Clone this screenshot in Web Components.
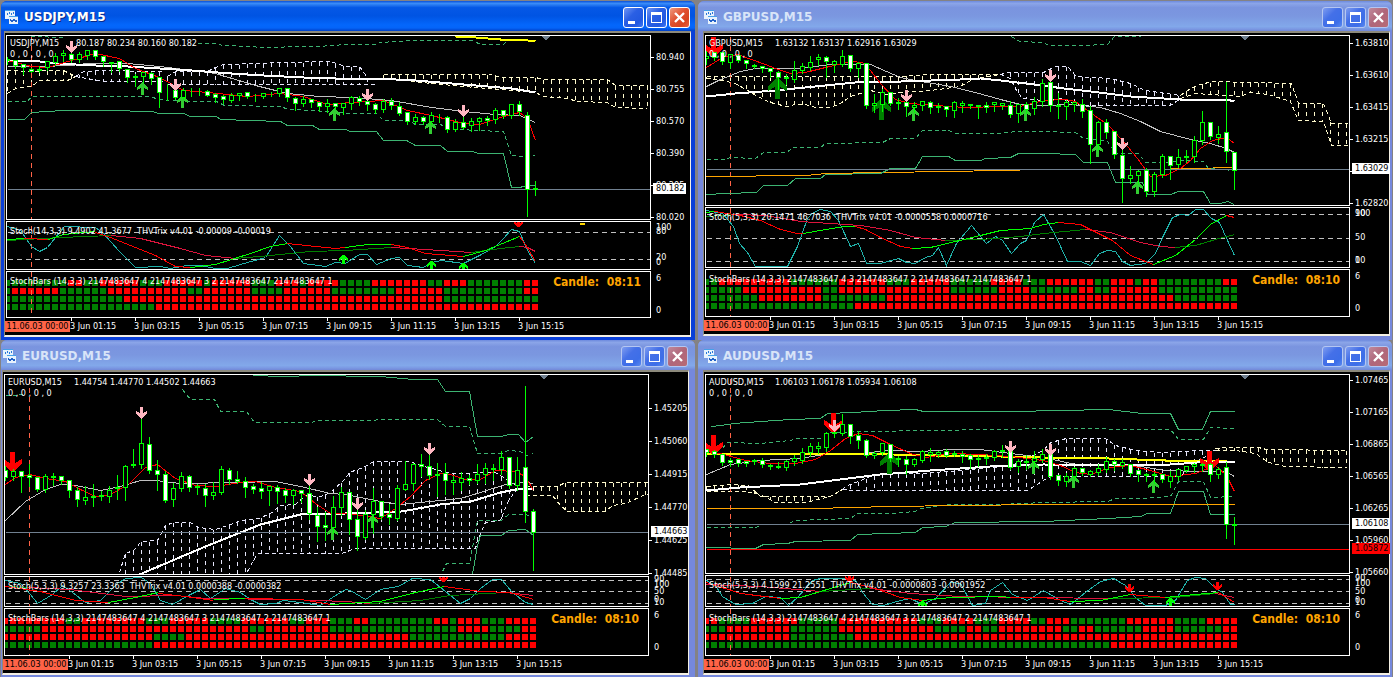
<!DOCTYPE html>
<html lang="en">
<head>
<meta charset="utf-8">
<title>Charts</title>
<style>
    html, body {
        margin: 0;
        height: 100%;
        background: #848284;
    }
</style>
</head>
<body>
<mdi-desktop>
    <chart-window caption="USDJPY,M15" active style="--edge-left: 3px; --edge-right: 4px; --edge-bottom: 3px">
        <trade-chart symbol="USDJPY"></trade-chart>
    </chart-window>
    <chart-window caption="GBPUSD,M15" style="--edge-left: 5px; --edge-right: 2px; --edge-bottom: 4px">
        <trade-chart symbol="GBPUSD"></trade-chart>
    </chart-window>
    <chart-window caption="EURUSD,M15" style="--edge-left: 1px; --edge-right: 6px; --edge-bottom: 2px">
        <trade-chart symbol="EURUSD"></trade-chart>
    </chart-window>
    <chart-window caption="AUDUSD,M15" style="--edge-left: 5px; --edge-right: 2px; --edge-bottom: 2px">
        <trade-chart symbol="AUDUSD"></trade-chart>
    </chart-window>
</mdi-desktop>

<script>
// Points are canvas pixels, measured from each chart's origin.
// Candle: u = up, d = down, then high, body top, body bottom, low. One every 8px.
// Bars: run lengths of green / red cells, newest on the right.
const CHARTS = {
    USDJPY: {
        title: 'USDJPY,M15',
        quote: '80.187 80.234 80.160 80.182',
        x: 7, y: 36, stochY: 222, stochHeight: 49, barsHeight: 47, barsTop: 8,
        axisTop: 16, axisGap: 20,
        prices: ['80.940', '80.755', '80.570', '80.390', '80.205', '80.020'],
        tags: [['80.182', 148, 'white']],
        lastPrice: 189,
        candles: `u56 59 60 63,d59 60 65 67,d63 64 67 73,d67 69 71 71,u65 69 70 71,u60 61 67 69,u52 56 62 64,u49 53 55 60,
            d51 54 59 61,u51 54 59 61,u49 50 55 58,d49 50 56 58,d56 56 61 65,u61 62 63 71,d61 61 68 70,d68 69 77 81,
            d73 76 77 85,u71 72 76 81,d71 73 78 83,d76 77 92 106,d83 90 90 99,d88 90 97 98,u87 90 97 98,d87 91 91 95,
            d87 90 90 94,d89 91 95 95,d92 94 97 101,d94 96 99 102,u92 95 100 101,u92 93 95 99,d91 92 96 97,d93 94 94 100,
            u92 93 96 97,d91 93 93 95,u87 88 93 95,d88 88 97 100,d96 98 103 109,u95 99 103 105,d98 99 102 106,d101 102 106 110,
            u98 103 106 111,d102 103 106 108,u102 103 107 113,u95 97 103 108,d95 98 101 104,d98 101 104 109,d102 104 109 112,u98 101 109 111,
            d97 101 105 108,d101 106 113 114,d111 112 121 123,u113 117 121 123,d115 117 121 123,u111 115 121 123,d113 116 116 121,d115 117 129 131,
            u118 122 129 130,d115 122 127 128,u117 121 125 130,u116 118 121 129,d115 118 120 124,u107 110 119 122,d109 110 115 117,u104 104 115 117,
            d100 104 111 114,d111 115 189 215,d180 188 189 194`,
        clouds: [
            ['#fffacd', '7,70 31,71 47,70 63,70 75,76', '7,93 15,88 31,86 39,80 67,80 75,76'],
            ['#e6e6fa', '75,76 83,71 103,70 155,71 163,71', '75,76 103,81 163,81'],
            ['#e6e6fa', '167,76 175,71 207,71 215,67 223,64 255,63 279,62 330,61 345,66 359,66 367,77', '167,84 375,84'],
            ['#fffacd', '383,74 490,74 500,77 535,77 543,79 607,79 615,85 647,85', '383,78 431,83 475,87 535,92 543,96 567,98 577,101 607,102 615,107 647,108']
        ],
        lines: [
            ['mediumseagreen', '7,119 24,119 31,112 62,110 124,110 134,111 152,111 158,113 184,113 189,116 216,116 220,119 280,121 287,125 312,125 319,129 345,129 350,131 376,131 383,140 406,140 415,145 440,145 447,151 472,151 478,153 503,153 511,187 519,187 527,185 535,185'],
            ['mediumseagreen', '7,101 27,101 31,96 150,96 158,99 189,101 216,101 224,105 280,106 288,109 312,110 350,113 376,113 383,120 408,120 415,124 440,124 447,128 475,130 503,131 511,155 519,156 535,155', 1, '4 3'],
            ['mediumseagreen', '31,36 63,37', 1, '4 3'],
            ['mediumseagreen', '197,43 217,43 222,45 252,46 258,47 281,47 287,46 318,46 345,44 376,44 379,42 415,40 472,40 480,44 503,44 506,41', 1, '4 3'],
            ['yellow', '455,36 475,37 500,39 520,39 535,41', 2],
            ['silver', '7,66 39,66 71,65 87,63 127,63 159,66 191,70 215,73 255,85 287,93 319,96 351,97 391,100 431,107 463,111 495,114 519,115 535,122'],
            ['white', '7,60 39,61 55,63 95,65 127,66 159,68 191,70 231,73 263,75 303,77 335,78 375,78 415,80 463,84 511,88 535,92', 2],
            ['red', '7,60 31,66 47,67 71,60 95,53 119,58 135,68 159,77 183,90 207,92 247,96 279,93 303,96 327,104 351,102 383,100 407,110 431,115 463,123 479,124 503,116 519,112 527,118 535,140']
        ],
        arrows: ['pd 71 53', 'pd 175 91', 'pd 367 101', 'pd 463 117', 'gu 142 81', 'gu 182 94', 'gu 334 107', 'gu 430 120'],
        stoch: {
            title: 'Stoch(14,3,3) 9.4902 41.3677  THVTrix v4.01 -0.00009 -0.00019',
            axis: [['100', 1], ['80', 5], ['20', 31], ['0', 36]],
            levels: [232, 259],
            lines: [
                ['lightseagreen', '7,226 20,230 31,246 39,251 47,247 55,237 64,226 95,227 103,233 118,250 135,267 160,266 170,268 186,265 200,265 215,268 227,268 240,264 265,257 279,235 290,246 303,263 325,266 335,262 345,263 359,254 367,254 376,264 391,258 399,257 407,265 423,267 431,262 441,260 463,263 479,255 495,246 503,238 511,229 519,231 527,250 535,263'],
                ['green', '7,240 60,237 111,235'],
                ['crimson', '111,235 140,238 180,248 205,255 235,258'],
                ['green', '235,258 270,255 310,251 345,250 391,247'],
                ['crimson', '391,247 425,249 471,252'],
                ['green', '471,252 500,248 519,246'],
                ['crimson', '519,246 527,247 535,251'],
                ['lime', '7,239 24,238'],
                ['red', '24,238 48,239'],
                ['lime', '48,239 63,234 95,231'],
                ['red', '95,232 110,237 135,247 155,255 175,266 190,267'],
                ['lime', '190,267 215,264 250,253 270,246 287,243'],
                ['red', '287,243 315,246 335,248 345,247'],
                ['lime', '345,247 367,244 391,244'],
                ['red', '391,244 407,247 425,253 463,256'],
                ['lime', '463,256 485,250 519,236'],
                ['red', '519,236 527,247 535,261'],
                ['gold', '579,223 584,223', 2]
            ],
            arrows: ['lu 343 254', 'lu 431 260', 'lu 463 262', 'rs 518 227']
        },
        bars: {
            title: 'StochBars (14,3,3) 2147483647 4 2147483647 3 2 2147483647 2147483647 1',
            timer: 'Candle:  08:11',
            rows: [
                'g8 r2 g2 r5 g3 r5 g1 r5 g3 r3 g1 r4 g4 r7 g2 r3 g7 r2',
                'g1 r6 g6 r10 g2 r6 g4 r6 g8 r6 g10 r2',
                'g15 r40 g12',
                'g19 r48'
            ]
        }
    },

    GBPUSD: {
        title: 'GBPUSD,M15',
        quote: '1.63132 1.63137 1.62916 1.63029',
        x: 706, y: 36, stochY: 208, stochHeight: 61, barsHeight: 48, barsTop: 9,
        axisTop: 2, axisGap: 20,
        prices: ['1.63810', '1.63610', '1.63415', '1.63215', '1.63015', '1.62820'],
        tags: [['1.63029', 128, 'white']],
        lastPrice: 169,
        candles: `u50 56 58 63,d51 52 57 59,d52 52 61 63,u53 54 62 67,d54 55 60 61,d59 60 63 67,d63 65 66 67,d65 66 68 71,
            d67 68 71 76,d70 72 77 88,d73 77 78 83,u60 70 79 81,u62 66 70 72,u55 62 67 69,u53 57 59 64,d55 57 61 76,
            u59 61 64 71,u49 56 64 65,d54 55 68 70,u61 63 68 76,d63 63 105 107,u93 103 105 111,u88 92 104 110,d91 92 103 104,
            d97 102 103 108,d98 102 106 115,u101 105 107 111,u100 101 105 109,d100 102 107 112,d102 106 107 111,d105 106 109 115,u100 102 110 116,
            u100 103 105 111,d104 104 105 107,d104 105 106 117,d101 105 107 111,u101 102 104 110,u103 103 105 108,d100 105 114 116,u103 104 113 121,
            d101 104 109 112,u96 101 108 113,u78 83 101 105,d79 82 105 110,d92 105 106 117,u99 102 106 118,u101 102 104 110,d98 104 111 116,
            d105 110 144 162,u120 122 144 149,d118 122 132 137,d131 131 154 157,d148 155 178 201,u165 175 178 182,u169 171 175 183,d167 170 191 195,
            u171 174 191 195,u153 156 174 176,d155 156 165 178,u148 157 164 166,d149 156 157 161,u135 140 156 161,u110 122 140 143,d121 122 136 138,
            u125 134 137 142,d81 132 151 161,d152 152 170 188`,
        clouds: [
            ['#fffacd', '706,76 900,76 930,74 1000,74', '706,78 722,80 735,83 747,90 759,97 770,102 786,106 795,104 805,104 815,107 830,107 840,103 850,96 870,90 886,94 900,92 930,90 960,86 970,80 980,77 1000,74'],
            ['#e6e6fa', '1000,74 1007,72 1043,72 1055,66 1067,66 1076,76 1110,78 1130,83 1145,90 1180,95', '1000,74 1010,78 1016,90 1022,98 1043,100 1060,98 1075,103 1085,105 1170,105 1180,98'],
            ['#fffacd', '1180,95 1190,88 1200,84 1212,81 1291,83 1298,103 1323,103 1331,123 1347,123', '1180,98 1195,93 1240,96 1250,92 1268,94 1290,101 1298,120 1323,121 1331,145 1347,145']
        ],
        lines: [
            ['orange', '706,176 806,175 826,173 880,172 950,171 1043,169 1150,169 1234,167'],
            ['mediumseagreen', '706,194 726,193 756,192 763,185 787,185 795,178 820,178 825,174 880,173 890,168 915,168 922,156 948,156 955,160 980,160 985,158 1010,157 1018,153 1043,153 1075,154 1083,162 1107,162 1115,182 1142,182 1147,194 1170,194 1178,191 1203,191 1210,203 1220,203 1227,201 1234,204'],
            ['mediumseagreen', '706,159 725,159 730,157 755,158 763,152 786,152 793,147 820,147 825,143 882,142 890,138 915,138 922,130 948,130 955,133 1000,133 1015,131 1043,131 1075,132 1083,138 1107,141 1115,153 1138,153 1145,162 1165,162 1180,160 1203,161 1208,168 1234,170', 1, '4 3'],
            ['mediumseagreen', '1011,36 1019,41 1043,42 1048,45 1080,45 1107,44 1114,36 1140,36', 1, '4 3'],
            ['silver', '706,86 720,79 740,71 755,68 800,68 830,64 870,64 886,71 900,77 920,81 950,86 975,92 1000,99 1020,104 1043,105 1070,104 1100,107 1120,113 1140,121 1160,131 1190,139 1210,143 1226,148 1234,152'],
            ['white', '706,96 735,93 775,90 815,86 855,82 901,81 960,79 980,78 1000,80 1042,85 1063,88 1090,91 1130,96 1180,99 1226,99 1234,101', 2],
            ['red', '706,67 722,57 737,54 765,64 775,68 790,73 805,72 825,67 850,61 862,62 870,70 880,83 895,99 910,103 935,105 965,107 1000,106 1020,106 1043,100 1065,99 1075,101 1091,113 1107,124 1122,140 1137,158 1150,176 1165,175 1180,168 1190,160 1200,148 1212,140 1226,137 1234,143']
        ],
        arrows: ['RD 713 57', 'DU 777 77', 'DU 881 98', 'gu 913 107', 'gu 1025 107', 'gu 1097 143', 'gu 1137 180', 'pd 906 102', 'pd 1050 82', 'pd 1122 150'],
        stoch: {
            title: 'Stoch(5,3,3) 20.1471 46.7036  THVTrix v4.01 -0.0000558 0.0000716',
            axis: [['90', 1], ['100', 1], ['50', 25], ['10', 48], ['0', 48]],
            levels: [214, 238, 261],
            lines: [
                ['lightseagreen', '706,210 722,213 733,226 739,243 747,252 755,266 787,266 797,246 807,218 813,212 820,209 830,211 838,220 850,246 858,243 866,263 880,263 898,258 906,262 915,263 925,257 932,255 938,247 946,265 956,243 971,225 986,243 995,236 1002,240 1011,253 1020,243 1026,240 1034,222 1043,214 1055,235 1067,261 1080,261 1090,265 1099,253 1107,250 1115,251 1122,261 1130,265 1145,263 1155,253 1163,235 1172,217 1180,214 1188,215 1195,209 1203,209 1211,218 1219,222 1227,240 1234,255'],
                ['green', '706,216 735,214'],
                ['crimson', '735,214 765,215 800,221 860,225 890,230 915,237 945,240'],
                ['green', '945,240 980,239 1020,236 1043,233 1085,229'],
                ['crimson', '1085,229 1110,232 1140,242 1160,246 1175,247'],
                ['green', '1175,247 1195,245 1215,239 1234,234'],
                ['lime', '706,212 714,211'],
                ['red', '714,211 740,215 760,220 780,229 797,233 803,233'],
                ['lime', '803,233 825,229 845,226 855,226'],
                ['red', '855,226 865,229 880,237 900,246 912,248'],
                ['lime', '912,248 930,247 955,241 980,235 1000,230 1030,228 1043,224 1058,222'],
                ['red', '1058,222 1080,224 1100,234 1112,240 1130,255 1153,264'],
                ['lime', '1153,264 1175,255 1195,239 1210,224 1226,215'],
                ['red', '1226,215 1234,217']
            ],
            arrows: []
        },
        bars: {
            title: 'StochBars (14,3,3) 2147483647 4 3 2147483647 2 2147483647 2147483647 1',
            timer: 'Candle:  08:10',
            rows: [
                'g2 r9 g6 r6 g3 r5 g5 r4 g3 r6 g2 r3 g1 r2 g8 r2',
                'g5 r10 g2 r14 g6 r4 g6 r2 g2 r6 g10',
                'g7 r8 g8 r36 g8',
                'g19 r48'
            ]
        }
    },

    EURUSD: {
        title: 'EURUSD,M15',
        quote: '1.44754 1.44770 1.44502 1.44663',
        x: 5, y: 375, stochY: 577, stochHeight: 31, barsHeight: 48, barsTop: 9,
        axisTop: 28, axisGap: 21,
        prices: ['1.45205', '1.45060', '1.44915', '1.44770', '1.44625', '1.44485'],
        tags: [['1.44663', 152, 'white']],
        lastPrice: 532,
        candles: `d465 470 477 479,u468 471 476 479,d470 471 476 491,d463 475 477 485,d476 477 489 490,u473 476 489 491,d472 476 477 484,d475 476 480 483,
            d479 480 490 496,d486 490 499 505,u485 497 500 503,d483 496 497 505,d490 495 496 499,u485 490 496 501,u474 487 488 498,u464 466 487 499,
            d448 464 465 466,u417 443 464 467,d436 444 470 472,d459 470 474 489,d470 474 500 501,u482 488 499 505,u471 476 488 490,d474 476 487 490,
            d483 486 487 493,d483 488 495 505,u481 492 495 498,u465 469 492 493,d467 470 479 483,d470 479 481 482,d476 481 487 496,d483 486 489 492,
            d481 488 491 497,u485 486 490 504,d484 487 491 502,d487 490 495 501,u488 490 495 503,d490 490 493 501,d483 493 513 518,d506 515 526 540,
            d511 525 527 539,u495 507 527 532,u486 492 507 514,d491 492 519 533,d509 519 536 549,u509 514 537 538,u487 501 514 532,d500 501 516 518,
            d503 514 517 523,u484 488 518 519,u460 484 489 489,u462 464 483 489,d453 464 466 475,d454 466 475 478,d462 474 475 495,d462 473 480 493,
            u475 480 482 493,u471 478 482 489,d474 478 480 483,u463 474 480 482,u462 468 474 482,d463 468 469 479,u450 457 469 473,d456 457 485 487,
            u456 470 485 489,d385 467 511 521,d508 511 532 569`,
        clouds: [
            ['#e6e6fa', '119,572 125,553 133,550 141,541 157,540 165,525 173,522 190,522 198,527 215,529 230,524 240,520 258,518 270,513 280,505 295,504 305,495 320,496 330,492 345,478 349,472 365,466 373,461 410,461 420,465 450,473 495,472 505,478 517,486', '119,580 242,580 257,553 341,553 355,548 475,548 477,540 485,522 500,520 508,500 517,488'],
            ['#fffacd', '525,486 557,486 565,482 647,482', '525,495 552,495 560,505 567,511 605,511 612,505 625,503 645,494 647,494']
        ],
        lines: [
            ['mediumseagreen', '253,375 282,376 315,375 375,376 380,376 413,379 437,379 445,391 469,391 477,436 501,436 508,434 518,434 525,442 533,436'],
            ['mediumseagreen', '182,389 190,399 214,399 220,411 246,411 254,422 311,422 316,420 437,419 445,426 469,426 477,453 501,453 508,450 520,451 526,455 533,453', 1, '4 3'],
            ['mediumseagreen', '5,395 15,395 25,393', 1, '4 3'],
            ['mediumseagreen', '472,574 477,545 480,535 501,535 508,530 525,529 533,535'],
            ['mediumseagreen', '442,571 446,563 469,563 477,520 501,520 508,514 525,514 533,517', 1, '4 3'],
            ['silver', '5,520 25,501 45,489 60,484 75,485 100,490 120,486 140,480 155,480 180,483 235,482 275,481 300,486 330,493 345,494 380,501 400,504 430,501 460,498 480,492 505,484 525,482 533,483'],
            ['white', '139,574 205,546 260,524 300,514 345,513 372,512 401,511 440,504 470,501 500,492 520,488 533,488', 2],
            ['red', '5,484 15,477 30,474 45,478 65,481 80,489 95,496 110,494 128,484 145,467 157,464 175,478 195,485 215,486 240,482 255,481 275,487 300,491 315,503 330,513 345,513 360,515 380,518 395,508 410,496 425,480 440,473 450,474 465,479 480,479 495,470 515,471 525,476 533,490']
        ],
        arrows: ['RD 12 472', 'pd 141 419', 'pd 309 486', 'pd 357 510', 'pd 429 455', 'gu 332 526', 'gu 372 514'],
        stoch: {
            title: 'Stoch(5,3,3) 9.3257 23.3363  THVTrix v4.01 0.0000388 -0.0000382',
            axis: [['90', -2], ['100', 3], ['50', 10], ['10', 21], ['0', 18]],
            levels: [580, 591, 603],
            lines: [
                ['lightseagreen', '5,580 20,583 30,594 37,603 52,594 62,585 72,592 85,602 100,600 117,583 125,578 141,577 150,583 160,600 172,604 190,594 200,589 210,598 225,588 240,592 250,599 260,604 275,603 283,600 300,602 320,605 332,597 345,589 350,590 365,599 380,589 398,586 412,578 430,579 445,591 460,603 470,598 480,588 492,579 501,579 512,592 525,602 533,604'],
                ['green', '5,586 28,587'],
                ['crimson', '28,587 70,589 125,596 175,595 205,598 290,599 345,601 370,603'],
                ['green', '370,603 420,600 450,595 505,592'],
                ['crimson', '505,592 533,595'],
                ['red', '5,586 40,591 75,600 108,602'],
                ['lime', '108,602 135,597 158,592'],
                ['red', '158,593 185,596 213,600'],
                ['lime', '213,599 245,598'],
                ['red', '245,598 300,599 330,604'],
                ['lime', '330,604 380,601 415,592 444,586'],
                ['red', '444,586 480,591 510,592 533,599']
            ],
            arrows: ['rs 443 582']
        },
        bars: {
            title: 'StochBars (14,3,3) 2147483647 4 2147483647 3 2147483647 2 2147483647 1',
            timer: 'Candle:  08:10',
            rows: [
                'r8 g2 r8 g3 r5 g4 r6 g2 r3 g3 r2 g8 r2 g1 r3 g3 r4',
                'g5 r26 g2 r8 g16 r4 g4 r2',
                'r19 g4 r28 g12 r4',
                'g19 r48'
            ]
        }
    },

    AUDUSD: {
        title: 'AUDUSD,M15',
        quote: '1.06103 1.06178 1.05934 1.06108',
        x: 706, y: 375, stochY: 576, stochHeight: 32, barsHeight: 48, barsTop: 9,
        axisTop: 0, axisGap: 20,
        prices: ['1.07465', '1.07165', '1.06865', '1.06565', '1.06265', '1.05960', '1.05660'],
        tags: [['1.06108', 144, 'white'], ['1.05872', 169, 'red']],
        lastPrice: 524,
        stopLoss: 549,
        candles: `d448 449 452 455,d449 451 454 456,d453 454 462 464,d457 460 462 465,d458 459 463 465,d460 461 463 465,u458 460 461 463,d457 460 464 466,
            d463 465 466 468,d461 466 467 467,u459 461 467 469,u454 458 461 464,u447 452 460 462,u442 446 452 455,u441 446 448 452,u431 433 447 450,
            d425 432 433 436,u413 424 433 434,d423 424 436 442,d430 435 440 447,d438 440 455 456,u450 453 455 457,u442 443 452 454,d444 444 458 460,
            d455 458 459 465,d455 459 464 473,u457 459 464 465,u449 451 460 461,u447 452 454 460,u450 452 454 456,d448 451 455 456,d450 453 454 455,
            d450 454 456 461,d453 455 459 467,d454 458 459 465,d453 457 458 463,u449 451 457 459,d444 450 451 456,d448 451 467 468,u458 461 466 471,
            d454 461 462 468,u450 458 461 466,u448 454 459 461,d451 454 476 478,d474 475 480 484,u472 476 481 485,u466 468 476 478,d467 468 472 474,
            u469 471 474 475,u463 468 472 474,u456 461 469 471,d458 461 464 469,u458 462 465 467,d464 464 473 475,d469 470 474 480,d472 474 475 480,
            d471 474 475 482,d473 474 479 481,u470 476 481 486,u469 469 476 479,u465 466 470 471,u462 464 466 471,d462 464 465 470,d462 464 474 480,
            u466 469 474 477,d461 467 524 537,d516 524 525 543`,
        clouds: [
            ['#fffacd', '706,486 730,484 748,485 760,496 830,496 842,489', '706,491 745,491 760,494 775,502 805,502 830,496 842,489'],
            ['#e6e6fa', '842,489 845,486 870,476 880,473 920,473 960,470 990,467 1010,466 1030,456 1043,450 1050,442 1066,438 1105,438 1115,445 1135,450 1160,452 1200,450 1215,450', '842,489 850,490 1027,490 1035,485 1043,480 1050,476 1180,476 1190,465 1215,450'],
            ['#fffacd', '1215,448 1225,447 1258,447 1266,449 1347,450', '1215,450 1235,450 1255,453 1268,462 1285,466 1347,467']
        ],
        lines: [
            ['mediumseagreen', '711,426 728,424 733,423 760,421 790,419 820,418 827,413 852,412 885,410 915,409 923,411 1012,411 1108,409 1142,413 1170,413 1178,429 1202,429 1210,411 1234,411'],
            ['mediumseagreen', '722,448 727,442 760,443 790,440 797,438 822,438 830,432 920,430 1000,429 1043,428 1170,429 1178,439 1203,439 1210,427 1234,428', 1, '4 3'],
            ['mediumseagreen', '706,527 755,527 763,524 786,524 795,520 820,519 850,518 857,513 890,513 915,511 920,508 950,504 1000,504 1043,502 1107,501 1115,498 1140,498 1170,496 1178,481 1203,481 1210,497 1234,496', 1, '4 3'],
            ['mediumseagreen', '706,547 755,548 763,544 787,543 795,541 850,540 857,534 915,532 922,527 945,526 955,522 1043,521 1107,518 1140,516 1147,513 1170,513 1178,491 1203,491 1210,514 1234,514'],
            ['orange', '706,508 814,508 890,506 960,505 1043,504 1234,504'],
            ['silver', '706,474 730,464 760,460 800,458 830,453 860,453 890,450 920,451 950,449 980,449 1010,453 1043,457 1080,465 1110,464 1140,466 1165,470 1200,471 1225,471 1234,476'],
            ['yellow', '706,453 850,453 935,455 1000,456 1043,457 1108,458 1165,460 1226,460', 2],
            ['white', '706,490 740,487 800,484 840,479 880,474 930,470 990,466 1043,464 1110,465 1170,464 1210,461 1234,461', 2],
            ['red', '706,451 720,453 745,460 770,463 795,463 815,459 830,450 845,438 858,433 872,435 890,444 910,453 925,457 950,453 980,454 1010,456 1043,460 1060,465 1075,472 1090,474 1110,467 1130,465 1150,470 1170,476 1195,473 1215,465 1226,475 1234,491']
        ],
        arrows: ['RD 713 455', 'RD 833 433', 'RD 1209 471', 'pd 834 432', 'DU 889 452', 'pd 1010 453', 'pd 1050 456', 'gu 1033 460', 'gu 1073 474', 'gu 1153 479'],
        stoch: {
            title: 'Stoch(5,3,3) 4.1599 21.2551  THVTrix v4.01 -0.0000803 -0.0001952',
            axis: [['90', -2], ['100', 3], ['50', 11], ['10', 22], ['0', 20]],
            levels: [579, 591, 603],
            lines: [
                ['lightseagreen', '706,580 715,585 722,596 735,604 752,603 765,596 780,597 788,605 797,597 812,580 820,578 845,578 855,580 862,592 872,604 883,605 900,600 910,598 922,604 935,598 950,582 960,583 972,605 985,603 990,590 1002,582 1012,594 1027,600 1043,590 1060,600 1070,604 1085,592 1100,581 1113,578 1125,585 1135,597 1145,605 1165,605 1175,600 1187,580 1195,577 1205,578 1215,588 1222,592 1230,604 1234,604'],
                ['crimson', '706,584 760,586 820,591'],
                ['green', '820,591 870,588'],
                ['crimson', '870,588 910,593 960,596 1110,598'],
                ['green', '1110,598 1175,597 1215,593'],
                ['crimson', '1215,593 1234,597'],
                ['red', '706,582 740,593 780,598'],
                ['lime', '780,598 800,597 830,588 850,582'],
                ['red', '850,582 875,588 900,597 922,600'],
                ['lime', '922,600 950,597 1000,596 1010,597'],
                ['red', '1010,597 1043,597 1070,601'],
                ['lime', '1070,601 1100,600 1130,594'],
                ['red', '1130,594 1165,597'],
                ['lime', '1165,597 1195,594 1218,592'],
                ['red', '1218,592 1234,602']
            ],
            arrows: ['rs 849 582', 'rs 1129 592', 'rs 1217 590', 'lu 922 600', 'lu 1170 597']
        },
        bars: {
            title: 'StochBars (14,3,3) 2147483647 4 2147483647 3 2147483647 2 2147483647 1',
            timer: 'Candle:  08:10',
            rows: [
                'r2 g4 r6 g5 r10 g3 r4 g3 r4 g2 r3 g7 r6 g4 r4',
                'g3 r8 g6 r12 g4 r2 g2 r8 g2 r2 g6 r4 g6 r2',
                'r11 g8 r48',
                'g51 r16'
            ]
        }
    }
};

const TIMES = ['01:15', '03:15', '05:15', '07:15', '09:15', '11:15', '13:15', '15:15'];

const STEP = 8;

// tip at 0,0 and pointing up
const ARROW = 'M0 0L5.5 6V9L1.5 6V13H-1.5V6L-5.5 9V6Z';
const BIG_ARROW = 'M0 0L9.5 9V14L2.5 9V21H-2.5V9L-9.5 14V9Z';
const THIN_ARROW = 'M0 0L4.5 4V7L1.5 4V9H-1.5V4L-4.5 7V4Z';

const ARROWS = {
    pd: [ARROW, 'lightpink', 180],
    gu: [ARROW, 'limegreen', 0],
    RD: [BIG_ARROW, 'red', 180],
    DU: [BIG_ARROW, 'green', 0],
    lu: [THIN_ARROW, 'lime', 0],
    rs: [THIN_ARROW, 'red', 180]
};

function toPoints(text) {
    return text.split(' ').map(p => p.split(',').map(Number));
}

function valueAt(points, x) {
    for (let i = 1; i < points.length; i++) {
        const [x0, y0] = points[i - 1];
        const [x1, y1] = points[i];
        if (x >= x0 && x <= x1) {
            return y0 + (y1 - y0) * (x - x0) / (x1 - x0);
        }
    }
    return null;
}

function drawLine([color, points, width = 1, dash = 'none']) {
    return `<polyline points="${points}" fill="none" stroke="${color}" stroke-width="${width}" stroke-dasharray="${dash}"/>`;
}

function drawArrow(text) {
    const [kind, x, y] = text.split(' ');
    const [shape, color, turn] = ARROWS[kind];
    return `<path d="${shape}" fill="${color}" transform="translate(${x} ${y}) rotate(${turn})"/>`;
}

function drawCloud([color, top, bottom], left) {
    const upper = toPoints(top);
    const lower = toPoints(bottom);
    let out = drawLine([color, top, 1, '4 3']) + drawLine([color, bottom, 1, '4 3']);
    for (let x = left; x <= left + 645; x += STEP) {
        const a = valueAt(upper, x);
        const b = valueAt(lower, x);
        if (a !== null && b !== null) {
            out += `<path d="M${x} ${Math.round(a)}V${Math.round(b)}" stroke="${color}" stroke-dasharray="4 4"/>`;
        }
    }
    return out;
}

function drawCandles(text, left) {
    return text.split(',').map((item, i) => {
        const candle = item.trim();
        const [high, top, bottom, low] = candle.slice(1).split(' ').map(Number);
        const x = left + i * STEP;
        const fill = candle[0] === 'u' ? 'black' : 'white';
        return `<path d="M${x} ${high}V${low + 1}" stroke="lime"/>
            <rect x="${x - 2}" y="${top}" width="4" height="${bottom - top}" fill="${fill}" stroke="lime"/>`;
    }).join('');
}

function drawBars(rows, top) {
    return rows.map((row, r) => {
        let col = 0;
        return row.split(' ').map(run => {
            let cells = '';
            for (let i = 0; i < Number(run.slice(1)); i++, col++) {
                cells += `<rect x="${col * STEP - 3}" y="${top + r * STEP}" width="6" height="6" fill="${run[0] === 'g' ? 'green' : 'red'}"/>`;
            }
            return cells;
        }).join('');
    }).join('');
}

class MdiDesktop extends HTMLElement {
    constructor() {
        super();
        this.attachShadow({ mode: 'open' });
        this.shadowRoot.innerHTML = `
            <style>
                :host {
                    display: grid;
                    box-sizing: border-box;
                    height: 100vh;
                    padding: 1px 1px 0;
                    grid-template-columns: 1fr 1fr;
                    grid-template-rows: minmax(0, 339fr) minmax(0, 337fr);
                    column-gap: 3px;
                    background: #848284;
                }
            </style>
            <slot></slot>
        `;
    }
}

class ChartWindow extends HTMLElement {
    constructor() {
        super();
        this.attachShadow({ mode: 'open' });
    }

    connectedCallback() {
        this.shadowRoot.innerHTML = `
            <style>
                :host {
                    --frame: #7588dc;
                    --bar: linear-gradient(#6d8ade, #8ba5e8 8%, #7a94df 22%, #7b97e0 50%, #82a8ea 85%, #7c9be4 92%, #7288d8);
                    --caption: #d8e4f8;
                    --button: linear-gradient(135deg, #7f9df0, #4470e8 40%, #3d6ee8 75%, #5a8af0);
                    --close: linear-gradient(135deg, #c08a9c, #b0667a 50%, #b86a74);
                    --ring: #b4c6f2;
                    display: flex;
                    flex-direction: column;
                    min-width: 0;
                    min-height: 0;
                    overflow: hidden;
                    border-radius: 6px 6px 0 0;
                    background: var(--frame);
                }

                :host([active]) {
                    --frame: #0a3fd8;
                    --bar: linear-gradient(#0a50d8, #3a8cf8 8%, #0558e6 22%, #0054e3 50%, #0467fc 80%, #0464f8 90%, #0040c8);
                    --caption: white;
                    --button: linear-gradient(135deg, #6f96f4, #2a5fe4 40%, #2258e0 75%, #3c78f4);
                    --close: linear-gradient(135deg, #ee9a80, #e05030 45%, #d84420 75%, #e86040);
                    --ring: white;
                }

                header {
                    display: flex;
                    align-items: center;
                    gap: 5px;
                    box-sizing: border-box;
                    flex: 0 0 30px;
                    padding: 2px calc(var(--edge-right) + 1px) 0 calc(var(--edge-left) + 1px);
                    background: var(--bar);
                }

                h2 {
                    flex: 1;
                    margin: 0;
                    color: var(--caption);
                    font: bold 12px/16px "DejaVu Sans", sans-serif;
                    white-space: nowrap;
                }

                :host([active]) h2 {
                    text-shadow: 1px 1px #0a2a88;
                }

                .buttons {
                    display: flex;
                    gap: 2px;
                }

                button {
                    display: grid;
                    place-items: center;
                    width: 21px;
                    height: 21px;
                    padding: 0;
                    border: 1px solid var(--ring);
                    border-radius: 3px;
                    background: var(--button);
                }

                .close {
                    background: var(--close);
                }

                svg {
                    display: block;
                }

                .body {
                    flex: 1;
                    display: flex;
                    min-height: 0;
                    margin: 0 var(--edge-right) var(--edge-bottom) var(--edge-left);
                    border: solid #f4f0e4;
                    border-width: 2px 1px 2px 1px;
                    border-top-color: #8c8a7c;
                    border-left-color: #8c8a7c;
                    background: black;
                }
            </style>
            <header>
                <svg width="14" height="15" viewBox="0 0 14 15" shape-rendering="crispEdges">
                    <path d="M0 1h10v5h3v8H4V9H0z" fill="#e8f2fc"/>
                    <path d="M0 0h10v1H0zM4 6h9v1H4z" fill="#48a0e8"/>
                    <path d="M2 5V3M4 4V2M6 5V3M8 4V2" stroke="#2878d8"/>
                    <path d="M5 9l2 3l2-3l2 3l1-2" fill="none" stroke="#2060c8"/>
                </svg>
                <h2>${this.getAttribute('caption')}</h2>
                <div class="buttons">
                    <button type="button" aria-label="Minimize"><svg width="17" height="17"><path d="M3 12h7v3H3z" fill="white"/></svg></button>
                    <button type="button" aria-label="Maximize"><svg width="17" height="17" shape-rendering="crispEdges"><path d="M3 3h11v11H3zM4 6v7h9V6z" fill="white" fill-rule="evenodd"/></svg></button>
                    <button type="button" class="close" aria-label="Close"><svg width="17" height="17"><path d="M4 4L13 13M13 4L4 13" stroke="white" stroke-width="2.4"/></svg></button>
                </div>
            </header>
            <div class="body"><slot></slot></div>
        `;
    }
}

class PlotPane extends HTMLElement {
    constructor() {
        super();
        this.attachShadow({ mode: 'open' });
        this.shadowRoot.innerHTML = `
            <style>
                :host {
                    display: block;
                    position: relative;
                    flex: 1;
                    min-width: 0;
                    overflow: hidden;
                    border: 1px solid white;
                }

                svg {
                    position: absolute;
                    inset: 0;
                    width: 100%;
                    height: 100%;
                }

                .text {
                    position: relative;
                    display: flex;
                    justify-content: space-between;
                    padding: var(--text-top, 4px) 9px 0 3px;
                    white-space: pre;
                }
            </style>
            <svg shape-rendering="crispEdges"></svg>
            <div class="text"><slot></slot></div>
        `;
    }

    set drawing(markup) {
        this.shadowRoot.querySelector('svg').innerHTML = markup;
    }
}

class ValueAxis extends HTMLElement {
    constructor() {
        super();
        this.attachShadow({ mode: 'open' });
        this.shadowRoot.innerHTML = `
            <style>
                :host {
                    display: flex;
                    flex-direction: column;
                    position: relative;
                    flex: 0 0 39px;
                    box-sizing: border-box;
                    padding-left: 5px;
                    line-height: 12px;
                }

                ::slotted(.over) {
                    position: absolute;
                    left: 2px;
                    padding-left: 3px;
                    line-height: 11px;
                }
            </style>
            <slot></slot>
        `;
    }
}

class TimeAxis extends HTMLElement {
    constructor() {
        super();
        this.attachShadow({ mode: 'open' });
        this.shadowRoot.innerHTML = `
            <style>
                :host {
                    display: flex;
                    flex: 0 0 17px;
                    overflow: hidden;
                    white-space: nowrap;
                    line-height: 11px;
                }

                mark {
                    flex: 0 0 65px;
                    height: 11px;
                    margin-top: 3px;
                    text-align: center;
                    background: tomato;
                    color: black;
                }

                time {
                    flex: 0 0 64px;
                    padding-top: 3px;
                    background: linear-gradient(white, white) 1px 0 / 1px 3px no-repeat;
                }
            </style>
            <mark>11.06.03 00:00</mark>${TIMES.map(t => `<time>3 Jun ${t}</time>`).join('')}
        `;
    }
}

class TradeChart extends HTMLElement {
    constructor() {
        super();
        this.attachShadow({ mode: 'open' });
    }

    connectedCallback() {
        const c = CHARTS[this.getAttribute('symbol')];
        this.shadowRoot.innerHTML = `
            <style>
                :host {
                    flex: 1;
                    display: flex;
                    flex-direction: column;
                    min-width: 0;
                    padding-top: 2px;
                    color: white;
                    font: 9px/11px "DejaVu Sans Condensed", "DejaVu Sans", sans-serif;
                }

                .row {
                    display: flex;
                    box-sizing: border-box;
                    margin-left: 1px;
                }

                .price {
                    flex: 1;
                    min-height: 0;
                    margin-bottom: 1px;
                    --text-top: 2px;
                }

                .symbol {
                    display: inline-block;
                    min-width: 66px;
                }

                .price value-axis {
                    padding-top: ${c.axisTop}px;
                    gap: ${c.axisGap}px;
                }

                .price value-axis span:not(.over) {
                    margin-left: -5px;
                    padding-left: 5px;
                    background: linear-gradient(white, white) 0 6px / 3px 1px no-repeat;
                }

                .stoch {
                    flex: 0 0 ${c.stochHeight}px;
                    margin-bottom: 1px;
                }

                .bars {
                    flex: 0 0 ${c.barsHeight}px;
                }

                .tag {
                    z-index: 1;
                    padding-right: 2px;
                    color: black;
                }

                .timer {
                    color: orange;
                    font: bold 12px/12px "DejaVu Sans Condensed", "DejaVu Sans", sans-serif;
                }
            </style>
            <div class="row price">
                <plot-pane><span><span class="symbol">${c.title}</span>${c.quote}<br>0 , 0 , 0 , 0</span></plot-pane>
                <value-axis>
                    ${c.prices.map(p => `<span>${p}</span>`).join('')}
                    ${c.tags.map(([p, top, color]) => `<span class="over tag" style="top: ${top}px; background: ${color}">${p}</span>`).join('')}
                </value-axis>
            </div>
            <div class="row stoch">
                <plot-pane><span>${c.stoch.title}</span></plot-pane>
                <value-axis>${c.stoch.axis.map(([v, top]) => `<span class="over" style="top: ${top}px">${v}</span>`).join('')}</value-axis>
            </div>
            <div class="row bars">
                <plot-pane><span>${c.bars.title}</span><span class="timer">${c.bars.timer}</span></plot-pane>
                <value-axis><span class="over" style="top: 2px">6</span><span class="over" style="top: 34px">0</span></value-axis>
            </div>
            <time-axis></time-axis>
        `;

        const [price, stoch, bars] = this.shadowRoot.querySelectorAll('plot-pane');
        const day = c.x + 3 * STEP;
        const level = (y, color, dash = 'none') => `<path d="M${c.x} ${y}h2000" stroke="${color}" stroke-dasharray="${dash}"/>`;
        const dayLine = `<path d="M${day} 0V2000" stroke="tomato" stroke-dasharray="5 4"/>`;

        // half a pixel keeps one pixel strokes on the grid
        price.drawing = `<g transform="translate(${0.5 - c.x} ${0.5 - c.y})">
            ${c.clouds.map(cloud => drawCloud(cloud, c.x)).join('')}
            ${dayLine}
            ${c.lines.map(drawLine).join('')}
            ${level(c.lastPrice, 'slategray')}
            ${c.stopLoss ? level(c.stopLoss, 'red') : ''}
            ${c.arrows.filter(a => /^[RDg]/.test(a)).map(drawArrow).join('')}
            ${drawCandles(c.candles, c.x)}
            ${c.arrows.filter(a => a[0] === 'p').map(drawArrow).join('')}
            <path d="M${c.x + 534} ${c.y - 0.5}h9l-4.5 5z" fill="slategray"/>
        </g>`;
        stoch.drawing = `<g transform="translate(${0.5 - c.x} ${0.5 - c.stochY})">
            ${c.stoch.levels.map(y => level(y, 'silver', '5 4')).join('')}
            ${dayLine}
            ${c.stoch.lines.map(drawLine).join('')}
            ${c.stoch.arrows.map(drawArrow).join('')}
        </g>`;
        bars.drawing = `${drawBars(c.bars.rows, c.barsTop)}
            <g transform="translate(${0.5 - c.x} 0)">${dayLine}</g>`;
    }
}

customElements.define('mdi-desktop', MdiDesktop);
customElements.define('chart-window', ChartWindow);
customElements.define('plot-pane', PlotPane);
customElements.define('value-axis', ValueAxis);
customElements.define('time-axis', TimeAxis);
customElements.define('trade-chart', TradeChart);
</script>
</body>
</html>
